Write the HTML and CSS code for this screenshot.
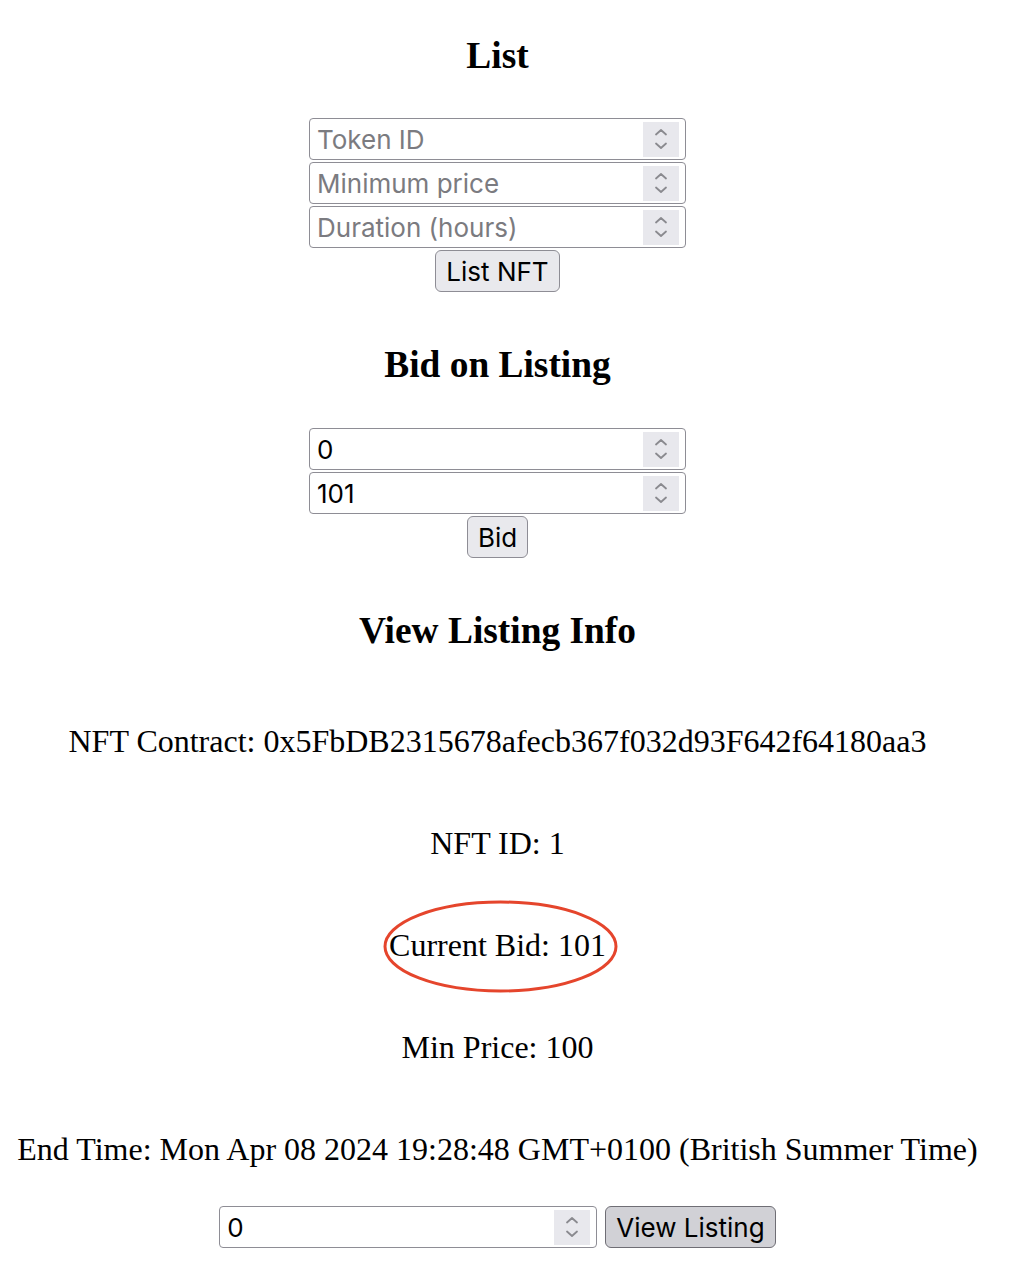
FILE: index.html
```html
<!DOCTYPE html>
<html lang="en">
<head>
<meta charset="utf-8">
<title>NFT Auction</title>
<link rel="stylesheet" href="styles.css">
</head>
<body>
<main class="page">
  <section class="section first">
    <h3 class="heading heading-first">List</h3>
    <div class="stack">
      <div class="field"><input class="field-input" type="text" placeholder="Token ID"><span class="spinner"><svg width="14" height="24" viewBox="0 0 14 24"><path d="M2 7.5 L7 3 L12 7.5" /><path d="M2 16.5 L7 21 L12 16.5" /></svg></span></div>
      <div class="field"><input class="field-input" type="text" placeholder="Minimum price"><span class="spinner"><svg width="14" height="24" viewBox="0 0 14 24"><path d="M2 7.5 L7 3 L12 7.5" /><path d="M2 16.5 L7 21 L12 16.5" /></svg></span></div>
      <div class="field"><input class="field-input" type="text" placeholder="Duration (hours)"><span class="spinner"><svg width="14" height="24" viewBox="0 0 14 24"><path d="M2 7.5 L7 3 L12 7.5" /><path d="M2 16.5 L7 21 L12 16.5" /></svg></span></div>
      <button class="btn">List NFT</button>
    </div>
  </section>

  <section class="section">
    <h3 class="heading">Bid on Listing</h3>
    <div class="stack">
      <div class="field"><input class="field-input" type="text" value="0"><span class="spinner"><svg width="14" height="24" viewBox="0 0 14 24"><path d="M2 7.5 L7 3 L12 7.5" /><path d="M2 16.5 L7 21 L12 16.5" /></svg></span></div>
      <div class="field"><input class="field-input" type="text" value="101"><span class="spinner"><svg width="14" height="24" viewBox="0 0 14 24"><path d="M2 7.5 L7 3 L12 7.5" /><path d="M2 16.5 L7 21 L12 16.5" /></svg></span></div>
      <button class="btn">Bid</button>
    </div>
  </section>

  <section class="section section-info">
    <h3 class="heading info-heading">View Listing Info</h3>
    <div class="info">
      <p class="info-line">NFT Contract: 0x5FbDB2315678afecb367f032d93F642f64180aa3</p>
      <p class="info-line">NFT ID: 1</p>
      <p class="info-line"><span class="circled">Current Bid: 101<svg class="ring" width="235" height="93" viewBox="0 0 235 93"><ellipse cx="117.5" cy="46.5" rx="115.5" ry="44.5" /></svg></span></p>
      <p class="info-line">Min Price: 100</p>
      <p class="info-line">End Time: Mon Apr 08 2024 19:28:48 GMT+0100 (British Summer Time)</p>
    </div>
    <div class="row">
      <div class="field field-wide"><input class="field-input" type="text" value="0"><span class="spinner"><svg width="14" height="24" viewBox="0 0 14 24"><path d="M2 7.5 L7 3 L12 7.5" /><path d="M2 16.5 L7 21 L12 16.5" /></svg></span></div>
      <button class="btn btn-active">View Listing</button>
    </div>
  </section>
</main>
</body>
</html>
```

FILE: styles.css
```css
html, body {
  margin: 0;
  padding: 0;
  background: #ffffff;
}

body {
  font-family: "Liberation Serif", "Times New Roman", serif;
  color: #000000;
}

.page {
  width: 965px;
  margin-left: 15px;
  padding-top: 35px;
  text-align: center;
}

.section {
  display: flex;
  flex-direction: column;
  align-items: center;
  margin-top: 52px;
}

.section.first {
  margin-top: 0;
}

.section-info {
  margin-top: 52px;
}

.heading {
  margin: 0 0 42px;
  font-size: 37.4px;
  line-height: 42px;
  font-weight: bold;
}

.heading-first {
  margin-bottom: 41px;
}

.info-heading {
  margin-bottom: 71px;
}

.stack {
  display: flex;
  flex-direction: column;
  align-items: center;
  gap: 2px;
}

.field {
  box-sizing: border-box;
  width: 377px;
  height: 42px;
  display: flex;
  align-items: center;
  border: 1.5px solid #8e8d95;
  border-radius: 4px;
  background: #ffffff;
  padding: 2px 6px 2px 7px;
}

.field-wide {
  width: 378px;
}

.field-input {
  flex: 1;
  min-width: 0;
  border: none;
  outline: none;
  padding: 0;
  margin: 0;
  background: transparent;
  font-family: "Inter", "Noto Sans", sans-serif;
  font-size: 26px;
  color: #000000;
}

.field-input::placeholder {
  color: #7b7b80;
}

.spinner {
  width: 36px;
  height: 35px;
  background: #e8e8ed;
  display: flex;
  align-items: center;
  justify-content: center;
}

.spinner svg {
  fill: none;
  stroke: #8a8a8f;
  stroke-width: 1.8;
  stroke-linecap: round;
  stroke-linejoin: round;
}

.btn {
  box-sizing: border-box;
  height: 42px;
  padding: 0 10px;
  border: 1.5px solid #8e8d95;
  border-radius: 6px;
  background: #e9e9ed;
  font-family: "Inter", "Noto Sans", sans-serif;
  font-size: 26px;
  color: #000000;
}

.btn-active {
  background: #d1d1d6;
  border-color: #6f6e75;
}

.info {
  display: flex;
  flex-direction: column;
  align-items: center;
  gap: 66px;
  margin-bottom: 39px;
}

.info-line {
  margin: 0;
  font-size: 32px;
  line-height: 36px;
  white-space: nowrap;
}

.circled {
  position: relative;
  display: inline-block;
}

.ring {
  position: absolute;
  left: -6px;
  top: -27px;
  fill: none;
  stroke: #e5452c;
  stroke-width: 3;
}

.row {
  display: flex;
  align-items: center;
  gap: 8px;
}
```
